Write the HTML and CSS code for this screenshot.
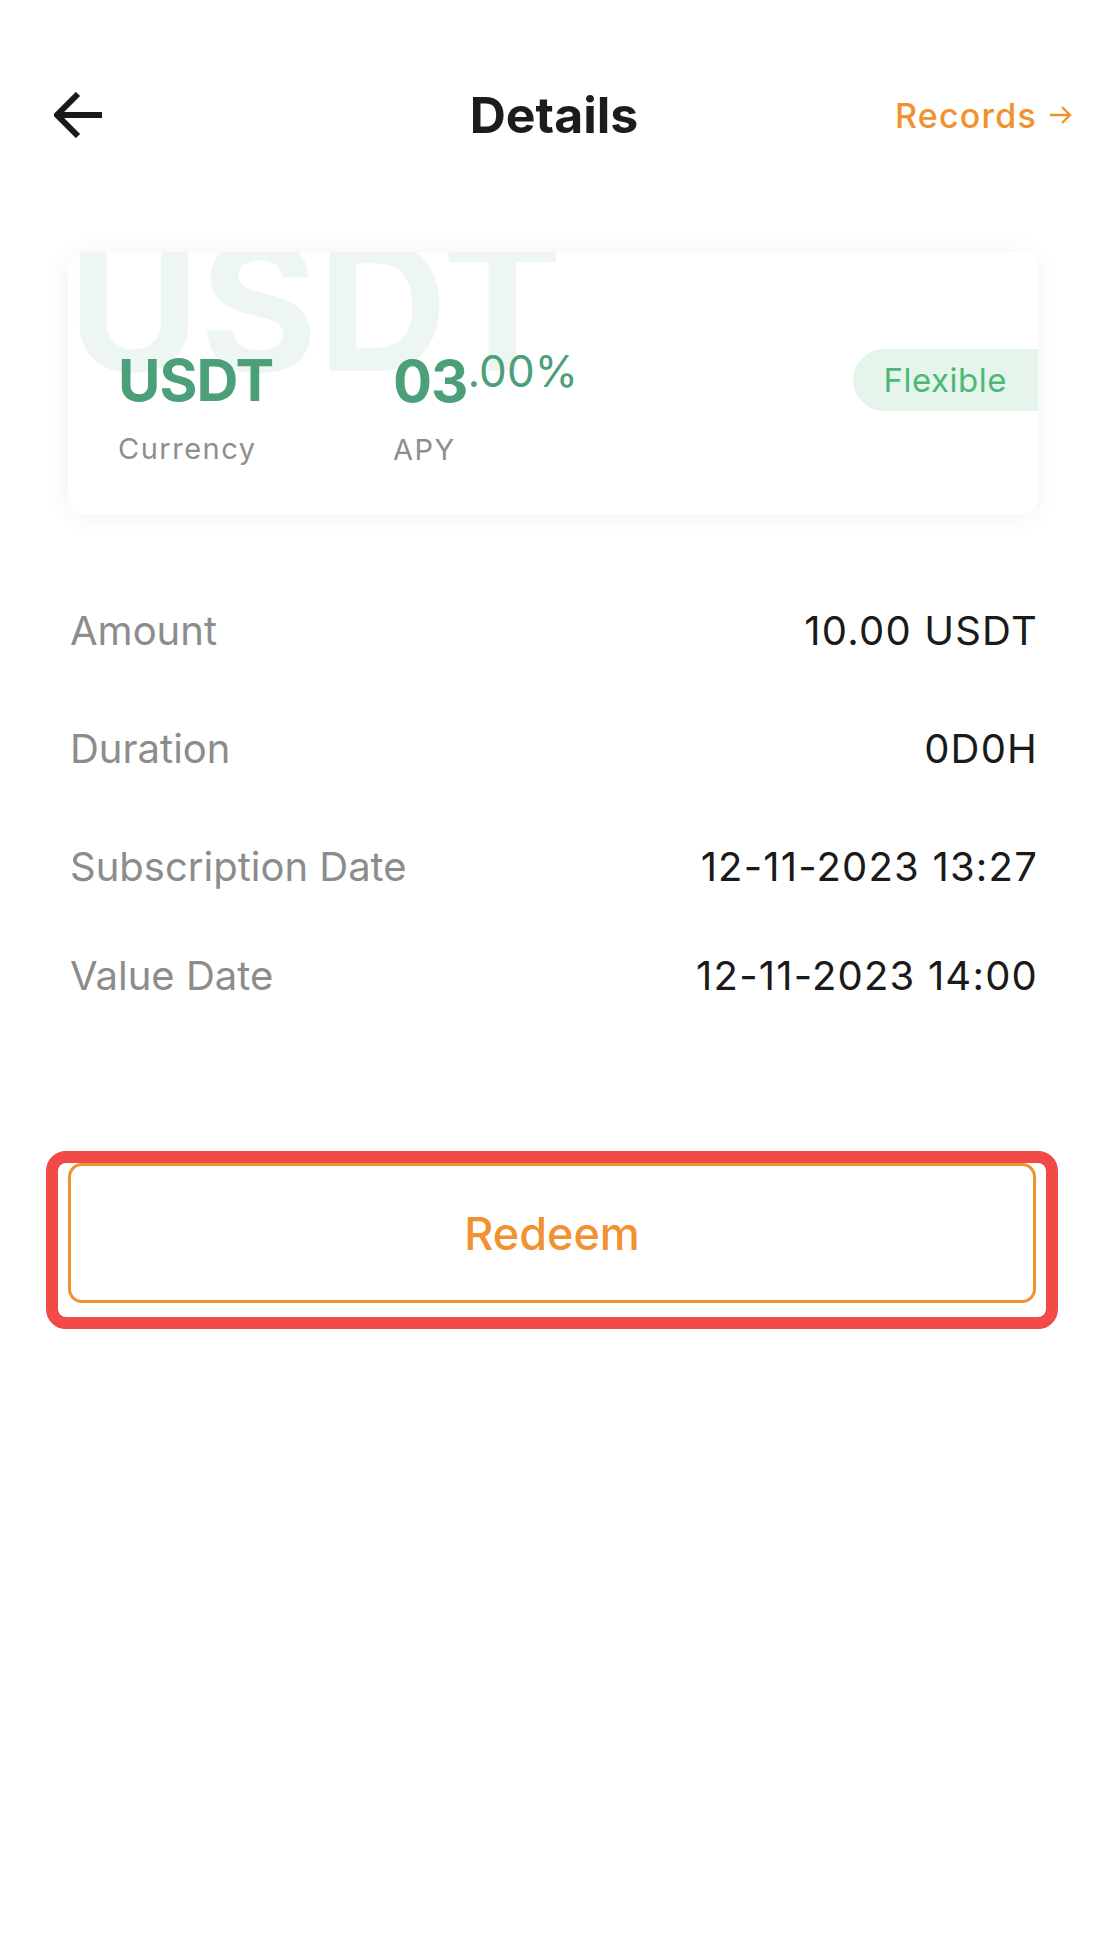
FILE: index.html
```html
<!DOCTYPE html>
<html lang="en">
<head>
    <meta charset="UTF-8">
    <meta name="viewport" content="width=device-width, initial-scale=1.0">
    <title>Details</title>
    <link rel="stylesheet" href="styles.css">
</head>
<body>
    <div class="topbar">
        <a class="back" href="#">
            <svg width="48" height="46" viewBox="0 0 48 46">
                <path d="M3 23 H48 M24 2 L3 23 L24 44" fill="none" stroke="#1a1a1a" stroke-width="6"/>
            </svg>
        </a>
        <h1 class="title">Details</h1>
        <a class="records" href="#">
            Records
            <svg width="23" height="20" viewBox="0 0 23 20">
                <path d="M1 10 H21 M13 2 L21 10 L13 18" fill="none" stroke="#f0922f" stroke-width="2.4"/>
            </svg>
        </a>
    </div>

    <div class="card">
        <div class="watermark">USDT</div>
        <div class="card-top">
            <div class="stat">
                <div class="stat-value">USDT</div>
                <div class="stat-label">Currency</div>
            </div>
            <div class="stat">
                <div class="stat-value">03<span class="decimals">.00%</span></div>
                <div class="stat-label">APY</div>
            </div>
            <div class="pill">Flexible</div>
        </div>
    </div>

    <div class="details">
        <div class="row">
            <span class="label">Amount</span>
            <span class="value">10.00 USDT</span>
        </div>
        <div class="row">
            <span class="label">Duration</span>
            <span class="value">0D0H</span>
        </div>
        <div class="row">
            <span class="label">Subscription Date</span>
            <span class="value">12-11-2023 13:27</span>
        </div>
        <div class="row">
            <span class="label">Value Date</span>
            <span class="value">12-11-2023 14:00</span>
        </div>
    </div>

    <div class="highlight">
        <button class="redeem">Redeem</button>
    </div>
</body>
</html>
```

FILE: styles.css
```css
body {
    margin: 0;
    background-color: #fff;
    font-family: Inter, "Liberation Sans", Arial, sans-serif;
    color: #1c1c1c;
}
.topbar {
    display: grid;
    grid-template-columns: 1fr auto 1fr;
    align-items: center;
    height: 80px;
    margin-top: 75px;
    padding: 0 36px;
}
.back {
    display: flex;
    justify-self: start;
    margin-left: 18px;
}
.title {
    margin: 0;
    font-size: 50px;
    font-weight: 700;
    line-height: 80px;
    color: #1c1c1c;
}
.records {
    justify-self: end;
    display: flex;
    align-items: center;
    gap: 12px;
    font-size: 34px;
    font-weight: 500;
    letter-spacing: 1.2px;
    color: #f0922f;
    text-decoration: none;
}
.card {
    position: relative;
    overflow: hidden;
    margin: 97px 70px 0 68px;
    padding: 97px 0 44px 50px;
    background-color: #fff;
    border-radius: 16px;
    box-shadow: 0 2px 26px rgba(0, 0, 0, 0.06);
}
.watermark {
    position: absolute;
    top: -36px;
    left: 0;
    font-size: 180px;
    font-weight: 700;
    line-height: 1;
    color: #edf6f2;
}
.card-top {
    position: relative;
    display: flex;
    align-items: flex-start;
}
.stat {
    width: 275px;
}
.stat-value {
    font-size: 58px;
    font-weight: 700;
    line-height: 62px;
    letter-spacing: -1px;
    color: #4ba07a;
}
.decimals {
    font-size: 44px;
    font-weight: 400;
    line-height: 1;
    letter-spacing: 0;
    vertical-align: 15px;
}
.stat-label {
    margin-top: 18px;
    font-size: 29px;
    line-height: 40px;
    letter-spacing: 1.5px;
    color: #8e8e8e;
}
.pill {
    margin-left: auto;
    height: 62px;
    padding: 0 31px;
    border-radius: 31px 0 0 31px;
    background-color: #e6f5ec;
    font-size: 33px;
    line-height: 62px;
    letter-spacing: 0.5px;
    color: #4cb878;
}
.details {
    margin-top: 58px;
    padding: 0 70px;
}
.row {
    display: flex;
    justify-content: space-between;
    padding: 31px 0;
    font-size: 40px;
    line-height: 56px;
}
.row:last-child {
    padding-top: 22px;
}
.label {
    color: #8c8c8c;
}
.value {
    letter-spacing: 1.2px;
    color: #1a1a1a;
}
.highlight {
    margin: 116px 50px 0 46px;
    padding: 0 10px 14px 10px;
    border: 12px solid #f24a47;
    border-radius: 20px;
}
.redeem {
    display: block;
    width: 100%;
    height: 140px;
    border: 3px solid #f0922f;
    border-radius: 14px;
    background-color: #fff;
    font-family: Inter, "Liberation Sans", Arial, sans-serif;
    font-size: 45px;
    font-weight: 500;
    color: #f0922f;
}
```
